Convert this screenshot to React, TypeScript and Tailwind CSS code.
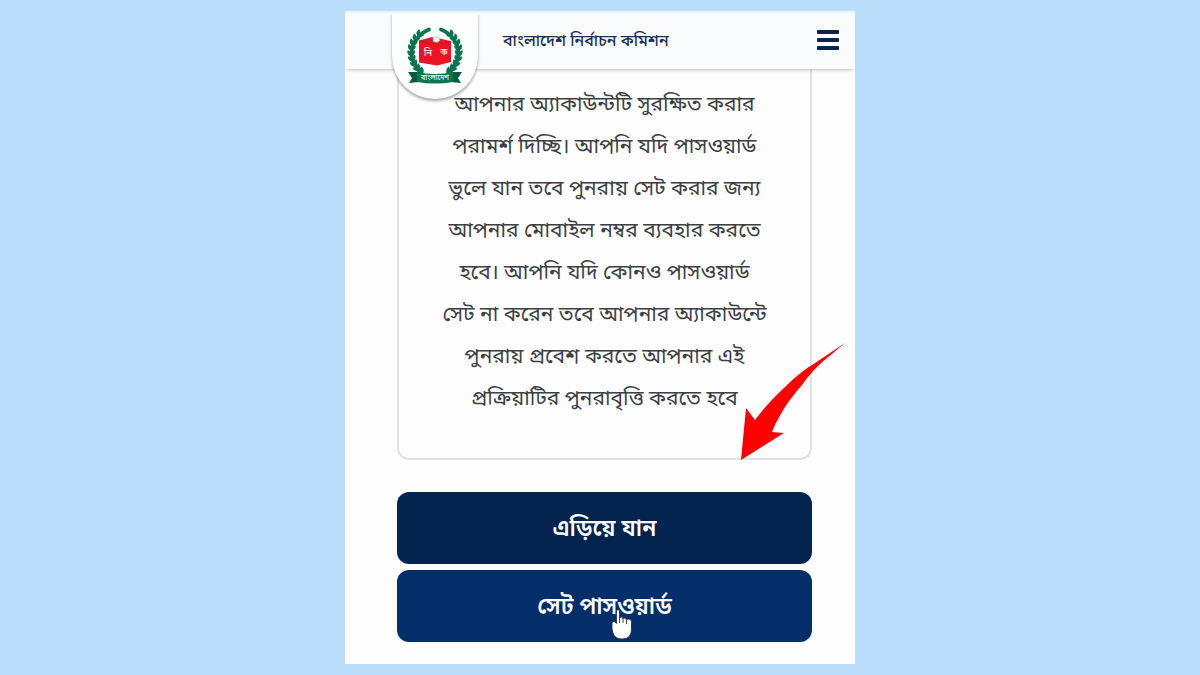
const noticeLines = [
  "আপনার অ্যাকাউন্টটি সুরক্ষিত করার",
  "পরামর্শ দিচ্ছি। আপনি যদি পাসওয়ার্ড",
  "ভুলে যান তবে পুনরায় সেট করার জন্য",
  "আপনার মোবাইল নম্বর ব্যবহার করতে",
  "হবে। আপনি যদি কোনও পাসওয়ার্ড",
  "সেট না করেন তবে আপনার অ্যাকাউন্টে",
  "পুনরায় প্রবেশ করতে আপনার এই",
  "প্রক্রিয়াটির পুনরাবৃত্তি করতে হবে",
];

const leafAngles = [-50, -37, -24, -11, 2, 15, 28, 41, 53];

function WreathSide() {
  return (
    <g fill="#0b7450">
      <path
        d="M22 2.500C11 7 4 17 4.500 28c1 7 4 13 10 18"
        fill="none"
        stroke="#0b7450"
        strokeWidth="3.800"
        strokeLinecap="round"
      />
      {leafAngles.map((a) => {
        const r = (a * Math.PI) / 180;
        const x = 28 - 24 * Math.cos(r);
        const y = 25 + 24 * Math.sin(r);
        return (
          <g key={a} transform={`translate(${x} ${y}) rotate(${-a})`}>
            <path d="M0 3C-3 3-4 0-3.500-2.500C-1-2.500 1 0 0 3Z" />
            <path d="M0 3C3 3 4.500 0 4-2.500C1-2.500-1 0 0 3Z" />
          </g>
        );
      })}
    </g>
  );
}

function Emblem() {
  return (
    <svg viewBox="0 0 56 58" className="h-[58px] w-[56px] overflow-visible" role="img" aria-label="বাংলাদেশ">
      <WreathSide />
      <g transform="translate(56 0) scale(-1 1)">
        <WreathSide />
      </g>
      <path d="M12 13.500l13-3.500 5 1 14 3v21L30 38.500 12 35.500Z" fill="#ec1424" />
      <path d="M12 14l16 3 16-2" fill="none" stroke="#c60d1e" strokeWidth="0.6" />
      <path d="M26 10l6 0.500 1 3-3 2-4-1Z" fill="#f7f4f3" stroke="#9aaaa3" strokeWidth="0.500" />
      <g fill="#fff" fontWeight="500" fontSize="9" textAnchor="middle">
        <text x="21" y="29">নি</text>
        <text x="37" y="28">ক</text>
      </g>
      <path d="M1 45l11 0v10l-10 1 3-5ZM55 45l-11 0v10l10 1-3-5Z" fill="#075b40" />
      <path d="M10 45q18 4 36 0v10q-18 3-36 0Z" fill="#0b7450" />
      <text x="28" y="53" fill="#dcefe6" fontWeight="600" fontSize="7" textAnchor="middle">
        বাংলাদেশ
      </text>
    </svg>
  );
}

function Arrow() {
  return (
    <svg
      viewBox="0 0 108 120"
      className="absolute -right-[38px] -bottom-[3px] h-[120px] w-[108px]"
      aria-hidden="true"
    >
      <path
        d="M1 119L6 67L15 79C24 67 34 56 45 46C54 37 65 28 75 22L105 2C96 10 86 17 77 26C71 32 67 37 62 44C56 51 50 58 45 66C40 74 35 83 32 91L44 92Z"
        fill="#ff0000"
      />
    </svg>
  );
}

function HandCursor() {
  return (
    <svg
      viewBox="0 0 22 31"
      className="absolute bottom-[2px] left-1/2 ml-[6px] h-[31px] w-[22px]"
      aria-hidden="true"
    >
      <path
        d="M5.500 2Q5.500 0.800 7 0.800Q8.500 0.800 8.500 2V9Q9 8 10.500 8Q12 8 12 10Q12.500 9 14 9Q15.500 9 15.500 11Q16 10 17.500 10Q20.500 10 20.500 13V20Q20.500 30 11 30Q4 30 2 24L1 20V14Q1.500 12 3.500 12.500L5.500 14.500Z"
        fill="#fff"
        stroke="#293343"
        strokeWidth="0.9"
      />
      <path d="M8.500 9v5M12 10v4M15.500 11v4" stroke="#293343" strokeWidth="0.9" />
    </svg>
  );
}

export default function App() {
  return (
    <div className="flex min-h-screen justify-center bg-[#badefb] pt-[11px] pb-[11px] font-['Noto_Sans_Bengali','Noto_Sans','Open_Sans',sans-serif]">
      <div className="flex w-full max-w-[510px] flex-col bg-[#fdfdfe]">
        <header className="relative z-10 flex h-[58px] items-center border-t-2 border-[#e8f5fc] bg-[#fafbfc] pb-[2px] shadow-[0_3px_3px_-2px_rgba(0,0,0,0.25)]">
          <a
            href="#"
            className="ml-[47px] flex h-[86px] w-[86px] shrink-0 items-center justify-center self-start rounded-b-full bg-[#fcfdfd] shadow-[0_2px_3px_rgba(0,0,0,0.35)]"
          >
            <Emblem />
          </a>
          <h1 className="ml-[25px] pt-1 text-[16px] font-medium whitespace-nowrap text-[#193052]">
            বাংলাদেশ নির্বাচন কমিশন
          </h1>
          <button
            type="button"
            aria-label="মেনু"
            className="mr-4 ml-auto flex w-[22px] flex-col gap-1"
          >
            <span className="h-[4px] rounded-[1px] bg-[#0d2450]" />
            <span className="h-[4px] rounded-[1px] bg-[#0d2450]" />
            <span className="h-[4px] rounded-[1px] bg-[#0d2450]" />
          </button>
        </header>

        <main className="pr-[43px] pl-[52px]">
          <section className="relative rounded-b-xl border-2 border-t-0 border-[#dfe1e4] pt-4 pb-[37px] text-center text-[21px] leading-[42px] text-[#3c3f43]">
            <p className="whitespace-nowrap">
              {noticeLines.map((line) => (
                <span key={line} className="block">
                  {line}
                </span>
              ))}
            </p>
            <Arrow />
          </section>

          <div className="mt-8 flex flex-col gap-[6px] text-[23px] font-semibold text-white">
            <button type="button" className="h-[72px] rounded-xl bg-[#02244f] pt-1">
              এড়িয়ে যান
            </button>
            <button type="button" className="relative h-[72px] rounded-xl bg-[#032e6a] pt-1">
              সেট পাসওয়ার্ড
              <HandCursor />
            </button>
          </div>
        </main>
      </div>
    </div>
  );
}
